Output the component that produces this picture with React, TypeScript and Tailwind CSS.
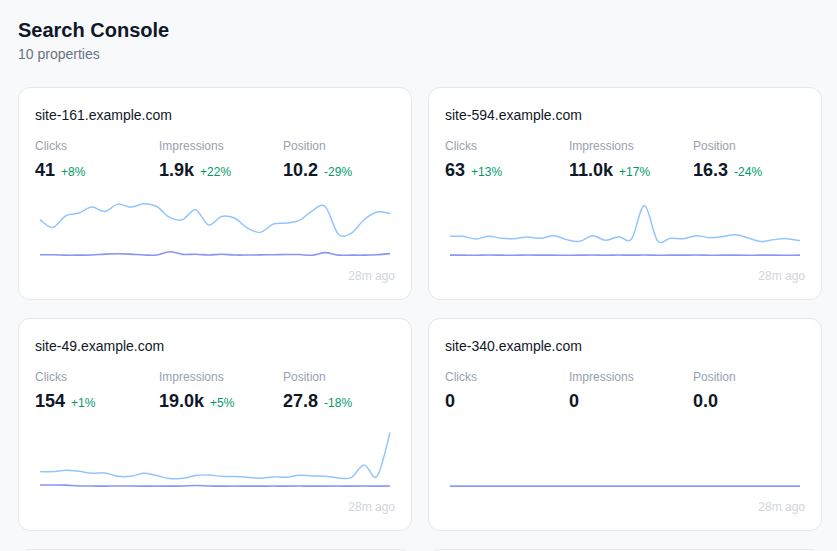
import React from 'react';

type Metric = { value: string; delta?: string };

interface Property {
  host: string;
  clicks: Metric;
  impressions: Metric;
  position: Metric;
  // y coordinates inside the 362x64 chart box, one per day
  impressionsLine: number[];
  clicksLine: number[];
  updated: string;
}

const flat = (y: number, n = 28) => Array.from({ length: n }, () => y);

const properties: Property[] = [
  {
    host: 'site-161.example.com',
    clicks: { value: '41', delta: '+8%' },
    impressions: { value: '1.9k', delta: '+22%' },
    position: { value: '10.2', delta: '-29%' },
    impressionsLine: [
      24.7, 32.4, 20.7, 18, 12, 16.4, 9, 12, 8.7, 11.4, 22.4, 24.7, 14.7, 30, 21.4, 23, 33, 37.4, 29, 28,
      25.4, 15.7, 11.4, 39, 38.4, 24.7, 17, 18.4,
    ],
    clicksLine: [
      59.9, 59.9, 60.3, 60.3, 60.2, 59.3, 58.9, 59.3, 60.2, 60.2, 56.9, 59.5, 59.4, 60.2, 59.4, 60.2, 60.2, 60,
      59.9, 59.7, 59.7, 60.4, 57.8, 60.3, 60.3, 60.3, 59.9, 58.8,
    ],
    updated: '28m ago',
  },
  {
    host: 'site-594.example.com',
    clicks: { value: '63', delta: '+13%' },
    impressions: { value: '11.0k', delta: '+17%' },
    position: { value: '16.3', delta: '-24%' },
    impressionsLine: [
      41.4, 41.4, 44, 41.4, 43.4, 43.7, 42, 43.4, 40.7, 44.7, 46.4, 40.7, 45.4, 41.7, 44, 10.4, 45.7, 43.4, 43.7,
      40.7, 42.7, 41.7, 39.7, 43, 46.7, 44.7, 43.7, 45.7,
    ],
    clicksLine: [
      60.3, 60.3, 60.4, 60.2, 60.3, 60.4, 60.2, 60.3, 60.3, 60.4, 60.3, 60.2, 60.4, 60.2, 60.3, 60.2, 60.4, 60.3,
      60.3, 60.2, 60.4, 60.3, 60.3, 60.4, 60.3, 60.3, 60.4, 60.3,
    ],
    updated: '28m ago',
  },
  {
    host: 'site-49.example.com',
    clicks: { value: '154', delta: '+1%' },
    impressions: { value: '19.0k', delta: '+5%' },
    position: { value: '27.8', delta: '-18%' },
    impressionsLine: [
      45.7, 45.7, 44.4, 45.4, 47.4, 47, 50.4, 50.4, 47.4, 49.7, 52.7, 52.4, 49.7, 49, 50.4, 50.7, 51.4, 52.4, 51,
      51.4, 49.4, 50, 50.4, 52, 51.7, 39, 50.4, 6.4,
    ],
    clicksLine: [
      59.2, 59.1, 59.3, 60.1, 60.2, 60.3, 60.1, 60.2, 60.3, 60.2, 60.3, 60.1, 59.7, 60.1, 60.3, 60.2, 60.3, 60.3,
      60.2, 60.3, 60.2, 60.3, 60.3, 60.2, 60.3, 60.2, 60.3, 60.2,
    ],
    updated: '28m ago',
  },
  {
    host: 'site-340.example.com',
    clicks: { value: '0' },
    impressions: { value: '0' },
    position: { value: '0.0' },
    impressionsLine: flat(60.4),
    clicksLine: flat(60.4),
    updated: '28m ago',
  },
  {
    host: 'site-812.example.com',
    clicks: { value: '22', delta: '+4%' },
    impressions: { value: '3.4k', delta: '+9%' },
    position: { value: '14.6', delta: '-6%' },
    impressionsLine: [
      30, 28, 33, 26, 24, 29, 31, 27, 22, 25, 30, 34, 28, 24, 21, 26, 29, 31, 27, 23, 20, 24, 28, 30, 26, 22, 18,
      21,
    ],
    clicksLine: flat(60),
    updated: '28m ago',
  },
  {
    host: 'site-27.example.com',
    clicks: { value: '9', delta: '+2%' },
    impressions: { value: '860', delta: '+3%' },
    position: { value: '31.4', delta: '-4%' },
    impressionsLine: [
      40, 38, 41, 36, 30, 34, 38, 40, 37, 33, 29, 35, 38, 36, 32, 28, 33, 37, 39, 35, 31, 27, 24, 30, 34, 32, 29,
      26,
    ],
    clicksLine: flat(60.2),
    updated: '28m ago',
  },
];

// Catmull-Rom through the points, written out as cubic segments
function linePath(ys: number[]): string {
  const n = ys.length;
  const step = 352 / (n - 1);
  const pts = ys.map((y, i) => [5 + i * step, y]);
  let d = `M${pts[0][0].toFixed(2)},${pts[0][1].toFixed(2)}`;
  for (let i = 0; i < n - 1; i++) {
    const p0 = pts[Math.max(i - 1, 0)];
    const p1 = pts[i];
    const p2 = pts[i + 1];
    const p3 = pts[Math.min(i + 2, n - 1)];
    const c1x = p1[0] + (p2[0] - p0[0]) / 6;
    const c1y = p1[1] + (p2[1] - p0[1]) / 6;
    const c2x = p2[0] - (p3[0] - p1[0]) / 6;
    const c2y = p2[1] - (p3[1] - p1[1]) / 6;
    d += ` C${c1x.toFixed(2)},${c1y.toFixed(2)} ${c2x.toFixed(2)},${c2y.toFixed(2)} ${p2[0].toFixed(2)},${p2[1].toFixed(2)}`;
  }
  return d;
}

const Stat: React.FC<{ label: string; metric: Metric }> = ({ label, metric }) => (
  <div>
    <div className="text-xs leading-4 text-gray-400">{label}</div>
    <div className="mt-0.5 flex items-baseline">
      <span className="text-lg font-bold leading-7 text-gray-900">{metric.value}</span>
      {metric.delta && <span className="ml-1.5 text-xs text-emerald-600">{metric.delta}</span>}
    </div>
  </div>
);

const PropertyCard: React.FC<{ property: Property }> = ({ property }) => (
  <div className="rounded-xl border border-gray-200 bg-white px-4 pb-[15px] pt-4">
    <div className="text-sm leading-[22px] text-gray-900">{property.host}</div>
    <div className="mt-3 grid grid-cols-3 gap-3">
      <Stat label="Clicks" metric={property.clicks} />
      <Stat label="Impressions" metric={property.impressions} />
      <Stat label="Position" metric={property.position} />
    </div>
    <svg className="mt-[11px] block h-16 w-full" viewBox="0 0 362 64" fill="none">
      <path d={linePath(property.impressionsLine)} stroke="#93c5fd" strokeWidth={1.5} strokeLinejoin="round" />
      <path d={linePath(property.clicksLine)} stroke="#8b95f4" strokeWidth={1.6} strokeLinejoin="round" />
    </svg>
    <div className="mt-[9px] text-right text-xs leading-4 text-gray-300">{property.updated}</div>
  </div>
);

export default function App() {
  return (
    <div className="min-h-screen bg-[#f8f9fb] font-['Liberation_Sans',Arial,sans-serif]">
      <div className="pb-8 pl-[18px] pr-[15px] pt-4">
        <h1 className="text-xl font-bold leading-7 text-gray-900">Search Console</h1>
        <p className="text-sm text-gray-500">10 properties</p>
        <div className="mt-[23px] grid grid-cols-2 gap-x-4 gap-y-[18px]">
          {properties.map((p) => (
            <PropertyCard key={p.host} property={p} />
          ))}
        </div>
      </div>
    </div>
  );
}
